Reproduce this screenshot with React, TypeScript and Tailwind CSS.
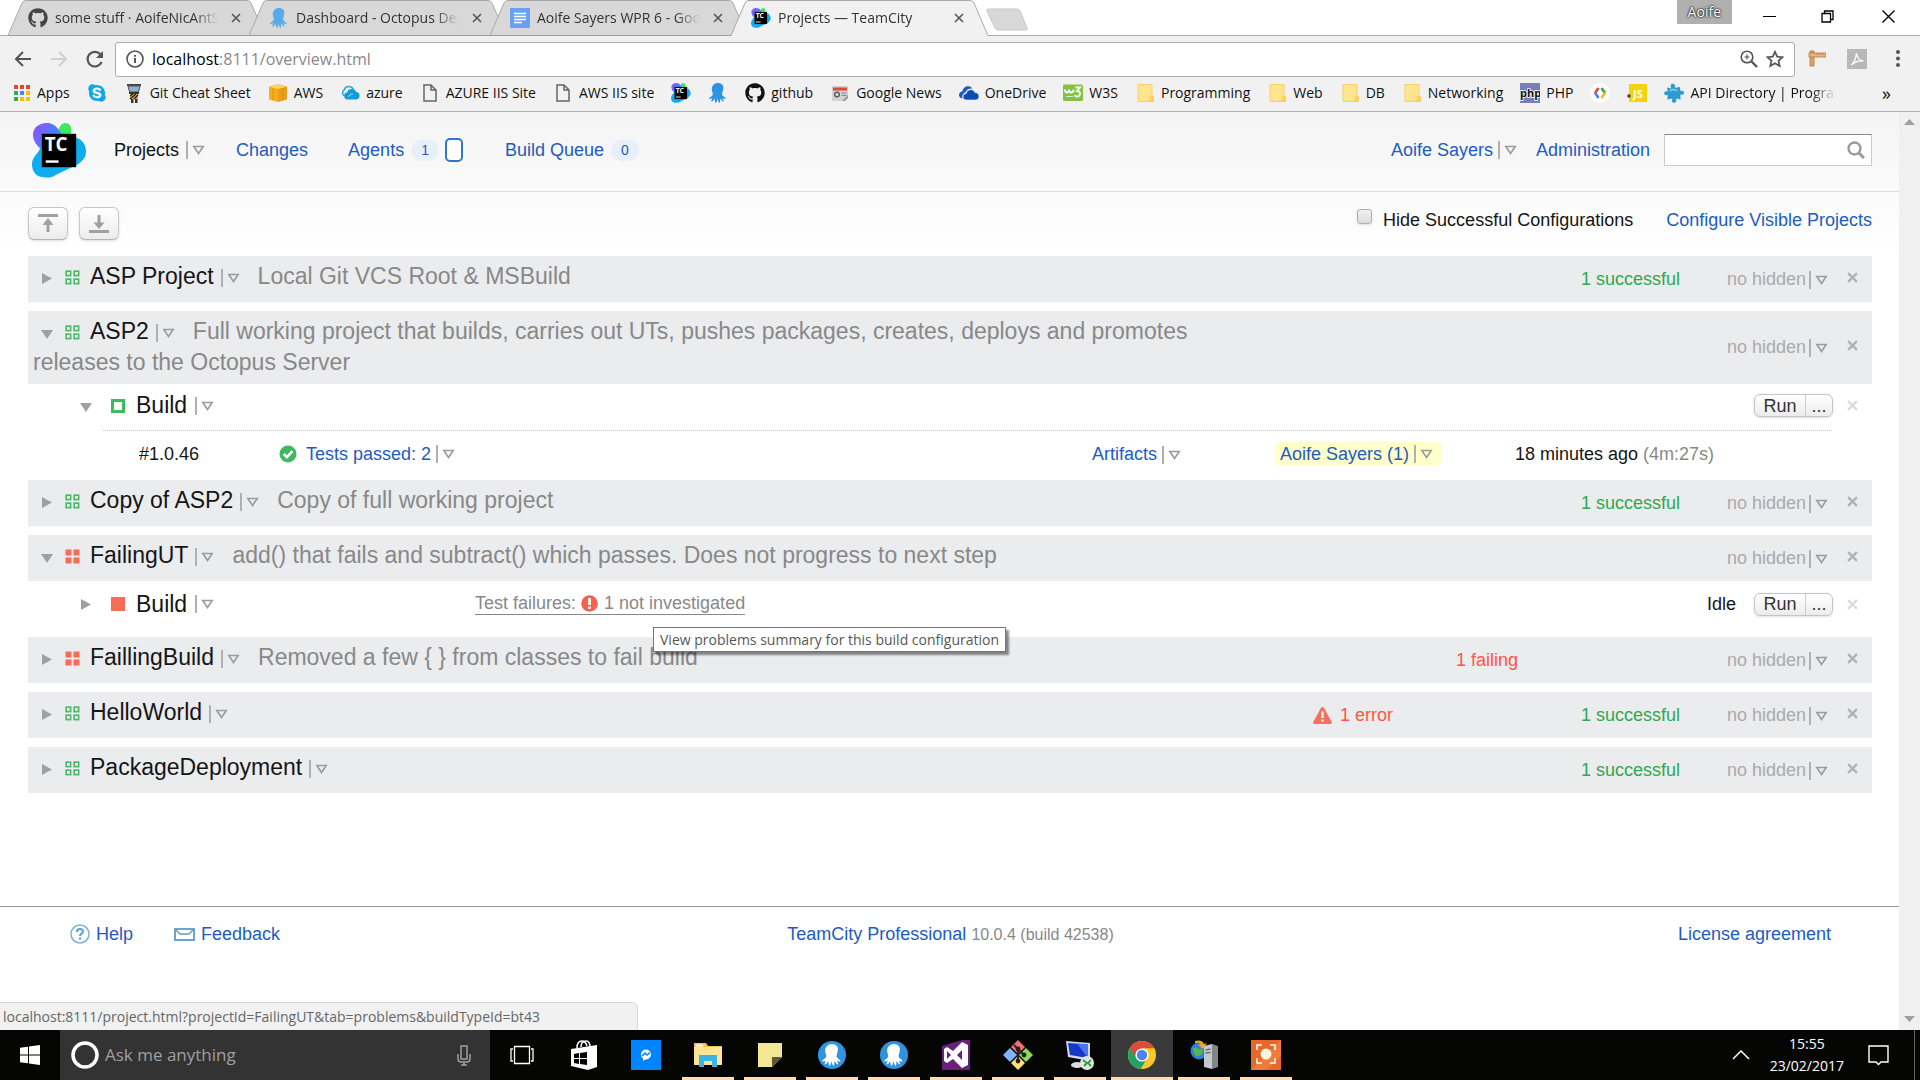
import React from "react";
import { FaGithub, FaSkype } from "react-icons/fa";

const UI = "font-['Open_Sans','Noto_Sans',sans-serif]";

/* ---------- drawings ---------- */

function TeamCityIcon({ size, id }: { size: number; id: string }) {
  return (
    <svg width={size} height={size} viewBox="0 0 56 56" aria-hidden="true">
      <defs>
        <linearGradient id={id} x1="0" y1="0" x2="1" y2="0.6">
          <stop offset="0" stopColor="#9a4cff" />
          <stop offset="1" stopColor="#2196ff" />
        </linearGradient>
      </defs>
      <path d="M26 12C27 4 30 0 34 0c4 0 6 3 6 8l-2 12H24z" fill="#3bea62" />
      <path d="M1 12C1 4 8 0 15 0c5 0 9 2 13 8l4 7-19 14C6 25 1 19 1 12z" fill={`url(#${id})`} />
      <path d="M44 15c7 1 11 7 11 14 0 6-3 9-8 13L24 53c-4 3-8 3-13 2C4 55 0 49 0 42c0-5 3-9 6-12l5-9z" fill="#0eaeee" />
      <rect x="10" y="11" width="35" height="34" fill="#000" />
      <text x="13" y="28" fontFamily="Open Sans, sans-serif" fontWeight="700" fontSize="19" fill="#fff">TC</text>
      <rect x="14" y="38" width="13" height="2.5" fill="#fff" />
    </svg>
  );
}

function Octopus({ size, color = "#2f93e0" }: { size: number; color?: string }) {
  return (
    <svg width={size} height={size} viewBox="0 0 20 20" aria-hidden="true">
      <path
        fill={color}
        d="M10 0C6.300 0 3.800 2.700 3.800 6c0 2.200 1 3.600 1 5.200 0 1.800-3 2.500-3.800 4.600 1.200.5 2.500-.2 3.300-.7-.2 1.400-1.200 2.300-1 3.500 1.800-.2 2.600-2 3.200-3.200.4 1.600.2 3.400 1.200 4.600 1.300-.9 1.300-2.800 1.600-4.300.8 1.400.8 3.400 2.300 4.300.9-1.300.3-3 .7-4.600.9 1 1.600 2.900 3.300 3.200.1-1.300-.8-2.200-1.100-3.500.9.600 2.100 1.200 3.400.7-.9-2.100-3.800-2.800-3.800-4.600 0-1.600 1.100-3 1.100-5.200C16.200 2.700 13.700 0 10 0z"
      />
    </svg>
  );
}

function DocsIcon() {
  return (
    <svg width="20" height="20" viewBox="0 0 20 20" aria-hidden="true">
      <rect width="20" height="20" rx="1" fill="#699ff5" />
      <path d="M4 5.500h12M4 8.500h12M4 11.500h12M4 14.500h8" stroke="#fff" strokeWidth="1.400" />
    </svg>
  );
}

function Close({ size = 10, color = "#555", w = 1.6 }: { size?: number; color?: string; w?: number }) {
  return (
    <svg width={size} height={size} viewBox="0 0 10 10" aria-hidden="true">
      <path d="M1 1l8 8M9 1l-8 8" stroke={color} strokeWidth={w} fill="none" />
    </svg>
  );
}

function FileIcon() {
  return (
    <svg width="20" height="20" viewBox="0 0 20 20" fill="none" stroke="#666" strokeWidth="1.500" aria-hidden="true">
      <path d="M4 2h7l5 5v11H4zM11 2v5h5" />
    </svg>
  );
}

function Folder() {
  return (
    <svg width="20" height="20" viewBox="0 0 20 20" aria-hidden="true">
      <path d="M3 1.500h14V13l1.500 1v4.500H3z" fill="#ffe58f" stroke="#f6d264" />
      <path d="M15 13.500h3v5h-3z" fill="#ffd968" stroke="#f0c24a" strokeWidth=".6" />
    </svg>
  );
}

function AppsIcon() {
  const c = ["#ea4335", "#ea4335", "#ea4335", "#34a853", "#4285f4", "#fbbc05", "#34a853", "#fbbc05", "#fbbc05"];
  return (
    <svg width="20" height="20" viewBox="0 0 20 20" aria-hidden="true">
      {c.map((f, i) => (
        <rect key={i} x={3 + (i % 3) * 6} y={2 + Math.floor(i / 3) * 6} width="4" height="4" fill={f} />
      ))}
    </svg>
  );
}

function TowerIcon() {
  return (
    <svg width="20" height="20" viewBox="0 0 20 20" aria-hidden="true">
      <path d="M3 1h14v2H3z" fill="#444" />
      <path d="M4 3h12l-1.500 6h-9z" fill="#8fb3c4" stroke="#555" />
      <path d="M5 9h10v2H5z" fill="#333" />
      <path d="M6 11h8v5H6z" fill="#e0a83c" />
      <path d="M6 13l3-2M6 16l6-5M10 16l4-4" stroke="#222" strokeWidth="1.300" />
      <path d="M7 16h2.500v4H7zM11 16h2.500v4H11z" fill="#333" />
    </svg>
  );
}

function AwsIcon() {
  return (
    <svg width="20" height="20" viewBox="0 0 20 20" aria-hidden="true">
      <path d="M1 3.500L10 1v18l-9-2.500z" fill="#f6ad1f" />
      <path d="M19 3.500L10 1v18l9-2.500z" fill="#eb9f16" />
      <path d="M1 3.500L10 1l9 2.500L10 6z" fill="#ffd36b" />
      <path d="M5 5v12M15 5v12" stroke="#d98d0c" strokeWidth=".8" />
    </svg>
  );
}

function AzureIcon() {
  return (
    <svg width="20" height="20" viewBox="0 0 20 20" aria-hidden="true">
      <path d="M4.500 13a3.500 3.500 0 0 1-.4-6A5 5 0 0 1 13.500 6.600" fill="none" stroke="#35a8e0" strokeWidth="1.600" />
      <path d="M7.500 16.500a3.700 3.700 0 0 1-.3-7.300 4.800 4.800 0 0 1 9-.2 3.800 3.800 0 0 1 .3 7.500z" fill="#0b9ddd" />
      <path d="M8 13.500c2 0 2-3.500 5-2.500" fill="none" stroke="#bfe6f7" strokeWidth="1" />
    </svg>
  );
}

function NewsIcon() {
  return (
    <svg width="20" height="20" viewBox="0 0 20 20" aria-hidden="true">
      <path d="M2 3h16v12l-3 3H2z" fill="#d2d2d2" />
      <rect x="3" y="4.500" width="14" height="3" fill="#e2493b" />
      <circle cx="7" cy="11.500" r="2.400" fill="none" stroke="#555" strokeWidth="1.300" />
      <path d="M11.500 10h5M11.500 12.500h5" stroke="#888" />
      <path d="M12 18l6-6v3l-3 3z" fill="#9a9a9a" />
    </svg>
  );
}

function OneDriveIcon() {
  return (
    <svg width="20" height="20" viewBox="0 0 20 20" aria-hidden="true">
      <path d="M3.500 15.500C1 15 0 13.500 0 12c0-2 1.500-3.300 3.300-3.500C4 4.500 7 3 9.500 3.200c1.800.2 3 1 4 2.500-3.500-.6-6 1-6.800 3.600-2.600.4-3.800 3.500-3.200 6.200z" fill="#1d56bd" />
      <path d="M7.300 17C5.300 17 4 15.700 4 14c0-2 1.300-3.200 3.200-3.400.5-2.400 2.300-3.900 4.600-3.900 2 0 3.500 1.100 4.200 2.900 2.500 0 4 1.600 4 3.700S18.500 17 16.500 17z" fill="#0d4cb3" stroke="#f1f1f1" strokeWidth=".6" />
    </svg>
  );
}

function W3Icon() {
  return (
    <svg width="20" height="20" viewBox="0 0 20 20" aria-hidden="true">
      <rect y="1.500" width="20" height="16.500" rx="1.500" fill="#82c341" />
      <path d="M2 6.500c0 4 4 4 4 0 0 4 4.500 4 4.500 0M12.500 4.500H17L14 8c4.500 0 3.500 6 0 5.500-1.200 0-2-.5-2-1.500" fill="none" stroke="#fff" strokeWidth="1.800" />
      <path d="M3 13.500h7" stroke="#d6efbc" />
    </svg>
  );
}

function PhpIcon() {
  return (
    <svg width="20" height="20" viewBox="0 0 20 20" aria-hidden="true">
      <rect width="20" height="20" fill="#7a7db8" />
      <text x="0" y="14" fontFamily="Open Sans, sans-serif" fontWeight="700" fontSize="11" fill="#111" stroke="#fff" strokeWidth="1.600" paintOrder="stroke">php</text>
    </svg>
  );
}

function CodeIcon() {
  return (
    <svg width="20" height="20" viewBox="0 0 20 20" fill="none" strokeWidth="2.600" aria-hidden="true">
      <circle cx="10" cy="10" r="10" fill="#fff" />
      <path d="M8.500 5L5 10" stroke="#ea4335" />
      <path d="M5 9.500l3.500 5.500" stroke="#4285f4" />
      <path d="M11.500 5l3.500 5" stroke="#34a853" />
      <path d="M15 9.500L11.500 15" stroke="#fbbc05" />
    </svg>
  );
}

function JsIcon() {
  return (
    <svg width="20" height="20" viewBox="0 0 20 20" aria-hidden="true">
      <rect x="2" y="1" width="18" height="18" fill="#f3d40b" />
      <text x="6" y="15" fontFamily="Open Sans, sans-serif" fontWeight="700" fontSize="11" fill="#fff">JS</text>
      <circle cx="2" cy="13" r="1.800" fill="#444" />
    </svg>
  );
}

function PuzzleIcon() {
  return (
    <svg width="20" height="20" viewBox="0 0 20 20" aria-hidden="true">
      <path
        fill="#2e9bd0"
        d="M3 4.600l4.200 1C6.600 3.800 6 1.600 8 .8c2.200-.6 3.600 1 2.900 4L16 4l.3 4c1.500-.6 3.200-.6 3.600 1.200.4 2.200-1.400 3-3.600 2.400l.3 5-4.600-1c.8 2 .2 4-1.600 4.200-2.200.2-2.900-1.500-2-4.200l-5 1 .3-4.600c-2 .7-3.300.2-3.600-1.400C.1 8.600 1.300 7.800 3.700 8.600z"
      />
      <path d="M6 8c2-2 5-2 7 0" stroke="#8dd3f2" fill="none" strokeWidth="1.500" />
    </svg>
  );
}

function ProjectGrid({ failing }: { failing?: boolean }) {
  const spots = [[0, 0], [8, 0], [0, 8], [8, 8]];
  return (
    <svg className="inline-block ml-3 mr-2.5" width="15" height="15" viewBox="0 0 15 15" aria-hidden="true">
      {spots.map(([x, y]) =>
        failing ? (
          <rect key={`${x}-${y}`} x={x + 0.5} y={y + 0.5} width="6" height="6" fill="#f76b59" />
        ) : (
          <rect key={`${x}-${y}`} x={x + 1.2} y={y + 1.2} width="4.400" height="4.400" fill="#f4f6f5" stroke="#4cb96a" strokeWidth="1.700" />
        ),
      )}
    </svg>
  );
}

function Disclosure({ open }: { open?: boolean }) {
  return (
    <button type="button" aria-label={open ? "Collapse" : "Expand"} className="inline-block w-3 h-3 leading-none align-middle">
      <svg width="12" height="12" viewBox="0 0 12 12" aria-hidden="true">
        {open ? <path d="M0 3h12L6 12z" fill="#a0a0a0" /> : <path d="M1 1l10 5.500-10 5.500z" fill="#a0a0a0" />}
      </svg>
    </button>
  );
}

function MenuArrow({ label, className = "" }: { label: string; className?: string }) {
  return (
    <button type="button" aria-label={label} className={`inline-flex items-center gap-1 align-middle ${className}`}>
      <span className="w-0.5 h-[18px] bg-[#b0b0b0]" />
      <svg width="13" height="10" viewBox="0 0 13 10" aria-hidden="true">
        <path d="M1.800 1.500h9.400L6.500 8.500z" fill="none" stroke="#9b9b9b" strokeWidth="1.600" />
      </svg>
    </button>
  );
}

/* ---------- browser chrome ---------- */

function Tab({ icon, title, active }: { icon: React.ReactNode; title: string; active?: boolean }) {
  const fill = active ? "#f1f1f1" : "#d8d8d8";
  return (
    <div className={`relative w-[241px] h-9 ${active ? "z-10" : ""}`}>
      <svg className="absolute left-0 top-0" width="257" height="36" viewBox="0 0 257 36" aria-hidden="true">
        <path d="M0 36L14 3Q15 .5 18 .5H239Q242 .5 243 3L257 36z" fill={fill} />
        <path d="M0 35.500L14 3Q15 .5 18 .5H239Q242 .5 243 3L257 35.500" fill="none" stroke="#a9a9a9" />
        {!active && <path d="M0 35.500H257" stroke="#9c9c9c" />}
      </svg>
      <div className="relative flex items-center h-full pl-5 pr-[3px]">
        <button type="button" className="flex items-center gap-[7px] flex-1 min-w-0 text-left">
          <span className="w-5 shrink-0">{icon}</span>
          <span className="flex-1 overflow-hidden whitespace-nowrap text-sm text-[#333] [mask-image:linear-gradient(to_right,#000_85%,transparent)]">
            {title}
          </span>
        </button>
        <button type="button" aria-label="Close tab" className="w-5 flex justify-center ml-2"><Close /></button>
      </div>
    </div>
  );
}

function TabStrip() {
  return (
    <div className="flex h-9 bg-white border-b border-[#a9a9a9] pl-2">
      <Tab icon={<FaGithub size={20} color="#444" />} title="some stuff · AoifeNicAntSaoir" />
      <Tab icon={<Octopus size={20} color="#5aaae8" />} title="Dashboard - Octopus Deploy" />
      <Tab icon={<DocsIcon />} title="Aoife Sayers WPR 6 - Google Docs" />
      <Tab icon={<TeamCityIcon size={20} id="tcTab" />} title="Projects — TeamCity" active />
      <button type="button" aria-label="New tab" className="ml-3.5 mt-1 self-center">
        <svg width="43" height="23" viewBox="0 0 43 23" aria-hidden="true">
          <path d="M2 1h29q2 0 3 2l7 17q.5 2-1.500 2H12q-2 0-3-2L1 3q-.5-2 1-2z" fill="#d8d8d8" stroke="#c6c6c6" />
        </svg>
      </button>
      <div className="ml-auto flex items-start">
        <span className="bg-[#b0b0b0] text-white text-sm leading-6 px-[11px] [text-shadow:0_0_2px_#000,0_0_2px_#000]">Aoife</span>
        <div className="flex h-8 items-center ml-2">
          <button type="button" aria-label="Minimise" className="w-[58px] flex justify-center">
            <svg width="13" height="13" viewBox="0 0 13 13"><path d="M0 6.500h13" stroke="#000" /></svg>
          </button>
          <button type="button" aria-label="Restore" className="w-[58px] flex justify-center">
            <svg width="13" height="13" viewBox="0 0 13 13" fill="none" stroke="#000" strokeWidth="1.300">
              <path d="M1 3.500h8.500V12H1zM3.500 3.500V1H12v8.500H9.500" />
            </svg>
          </button>
          <button type="button" aria-label="Close" className="w-16 flex justify-center"><Close size={15} color="#000" w={0.9} /></button>
        </div>
      </div>
    </div>
  );
}

function Toolbar() {
  return (
    <div className="flex items-center h-10 pt-1.5 bg-[#f1f1f1]">
      <div className="flex items-center pl-[5px] pr-[3px]">
        <button type="button" aria-label="Back" className="w-9 flex justify-center">
          <svg width="18" height="18" viewBox="0 0 18 18" fill="none" stroke="#555" strokeWidth="2"><path d="M17 9H2M9 2L2 9l7 7" /></svg>
        </button>
        <button type="button" aria-label="Forward" className="w-9 flex justify-center">
          <svg width="18" height="18" viewBox="0 0 18 18" fill="none" stroke="#d0d0d0" strokeWidth="2"><path d="M1 9h15M9 2l7 7-7 7" /></svg>
        </button>
        <button type="button" aria-label="Reload" className="w-[35px] flex justify-center">
          <svg width="19" height="19" viewBox="0 0 19 19" aria-hidden="true">
            <path d="M15.500 4.500A7.300 7.300 0 1 0 16.600 12" fill="none" stroke="#555" strokeWidth="2.200" />
            <path d="M18 1v7h-7z" fill="#555" />
          </svg>
        </button>
      </div>
      <div className="flex flex-1 items-center h-[35px] bg-white border border-[#aaa] rounded-[3px] px-2.5 gap-2">
        <svg width="18" height="18" viewBox="0 0 18 18" fill="none" stroke="#555" strokeWidth="1.600" aria-hidden="true">
          <circle cx="9" cy="9" r="8" /><path d="M9 8v5M9 5v1.800" strokeWidth="2" />
        </svg>
        <div className="flex-1 text-[16px] text-[#888] whitespace-nowrap"><span className="text-black">localhost</span>:8111/overview.html</div>
        <button type="button" aria-label="Zoom">
          <svg width="18" height="18" viewBox="0 0 18 18" fill="none" stroke="#555" strokeWidth="1.600">
            <circle cx="7" cy="7" r="5.800" /><path d="M7 4.500v5M4.500 7h5" strokeWidth="1.200" /><path d="M11.500 11.500l5.500 5.500" strokeWidth="2.400" />
          </svg>
        </button>
        <button type="button" aria-label="Bookmark this page">
          <svg width="18" height="18" viewBox="0 0 18 18" fill="none" stroke="#555" strokeWidth="1.700">
            <path d="M9 1.800l2.200 4.900 5.300.5-4 3.600 1.200 5.300L9 13.300l-4.700 2.800 1.200-5.300-4-3.600 5.300-.5z" />
          </svg>
        </button>
      </div>
      <div className="flex items-center">
        <button type="button" aria-label="Ruler" className="w-11 flex justify-center">
          <svg width="18" height="18" viewBox="0 0 18 18" aria-hidden="true">
            <path d="M2 1h4v15H2z" fill="#e0a066" stroke="#b9763a" strokeWidth=".8" />
            <path d="M1 3h17v4H1z" fill="#eab27e" stroke="#b9763a" strokeWidth=".8" />
            <path d="M9 3v2M12 3v2M15 3v2" stroke="#b9763a" strokeWidth=".8" />
          </svg>
        </button>
        <button type="button" aria-label="PDF" className="w-9 flex justify-center">
          <svg width="20" height="20" viewBox="0 0 20 20" aria-hidden="true">
            <rect width="20" height="20" fill="#b8b8b8" />
            <path d="M4 16c3-2 5-7 5.500-12 1 6 3 8 7 8-4-.5-8 .5-12.500 4z" fill="none" stroke="#fff" strokeWidth="1.300" />
          </svg>
        </button>
        <button type="button" aria-label="Menu" className="w-[45px] flex justify-center">
          <svg width="6" height="20" viewBox="0 0 6 20" fill="#555"><circle cx="3" cy="3" r="2" /><circle cx="3" cy="9.500" r="2" /><circle cx="3" cy="16" r="2" /></svg>
        </button>
      </div>
    </div>
  );
}

const bookmarks: { icon: React.ReactNode; label?: string; name?: string }[] = [
  { icon: <AppsIcon />, label: "Apps" },
  { icon: <FaSkype size={20} color="#0ba8ea" />, name: "Skype" },
  { icon: <TowerIcon />, label: "Git Cheat Sheet" },
  { icon: <AwsIcon />, label: "AWS" },
  { icon: <AzureIcon />, label: "azure" },
  { icon: <FileIcon />, label: "AZURE IIS Site" },
  { icon: <FileIcon />, label: "AWS IIS site" },
  { icon: <TeamCityIcon size={20} id="tcBm" />, name: "TeamCity" },
  { icon: <Octopus size={20} />, name: "Octopus" },
  { icon: <FaGithub size={20} color="#111" />, label: "github" },
  { icon: <NewsIcon />, label: "Google News" },
  { icon: <OneDriveIcon />, label: "OneDrive" },
  { icon: <W3Icon />, label: "W3S" },
  { icon: <Folder />, label: "Programming" },
  { icon: <Folder />, label: "Web" },
  { icon: <Folder />, label: "DB" },
  { icon: <Folder />, label: "Networking" },
  { icon: <PhpIcon />, label: "PHP" },
  { icon: <CodeIcon />, name: "Developers" },
  { icon: <JsIcon />, name: "JS" },
];

function BookmarksBar() {
  return (
    <div className="flex items-center h-9 pl-[11px] pr-[29px] pb-0.5 gap-[17px] bg-[#f1f1f1] border-b border-[#b0b0b0] text-sm whitespace-nowrap text-[#111]">
      {bookmarks.map((b, i) => (
        <a key={i} href="#" aria-label={b.label ? undefined : b.name} className="flex items-center gap-1.5 shrink-0">
          {b.icon}
          {b.label}
        </a>
      ))}
      <a href="#" className="flex items-center gap-1.5 w-[172px] min-w-0 overflow-hidden [mask-image:linear-gradient(to_right,#000_85%,transparent)]">
        <span className="shrink-0"><PuzzleIcon /></span>API Directory | ProgrammableWeb
      </a>
      <button type="button" aria-label="More bookmarks" className="ml-auto text-lg">»</button>
    </div>
  );
}

/* ---------- TeamCity page ---------- */

function Header() {
  return (
    <header className="flex items-center h-20 pl-8 pr-[27px] pb-[3px] border-b border-[#dcdcdc] bg-linear-to-b from-[#f4f4f4] to-[#fafafa] text-[#1d5cc0]">
      <TeamCityIcon size={55} id="tcLogo" />
      <nav className="flex items-center ml-[27px]">
        <a href="#" className="text-[#111]">Projects</a>
        <MenuArrow label="Projects menu" className="ml-[7px]" />
        <a href="#" className="ml-[31px]">Changes</a>
        <a href="#" className="ml-10">Agents</a>
        <span className="ml-[7px] px-2.5 rounded-full bg-[#e6effa] text-sm leading-[21px]">1</span>
        <span className="ml-1.5 w-[18px] h-6 rounded-[5px] border-2 border-[#2f76cf] bg-white" />
        <a href="#" className="ml-[42px]">Build Queue</a>
        <span className="ml-[7px] px-2.5 rounded-full bg-[#e6effa] text-sm leading-[21px]">0</span>
      </nav>
      <div className="ml-auto flex items-center">
        <a href="#">Aoife Sayers</a>
        <MenuArrow label="User menu" className="ml-[5px]" />
        <a href="#" className="ml-[19px]">Administration</a>
        <div className="ml-3.5 flex items-center w-[208px] h-8 bg-white border border-[#ccc] border-t-[#888] pr-1.5">
          <input type="text" aria-label="Search" className="flex-1 min-w-0 h-full px-2 outline-none" />
          <svg width="18" height="18" viewBox="0 0 18 18" fill="none" stroke="#999" aria-hidden="true">
            <circle cx="7.500" cy="7.500" r="6" strokeWidth="2.400" /><path d="M12 12l5 5" strokeWidth="3" />
          </svg>
        </div>
      </div>
    </header>
  );
}

function SquareButton({ label, children }: { label: string; children: React.ReactNode }) {
  return (
    <button
      type="button"
      aria-label={label}
      className="flex items-center justify-center w-10 h-[33px] rounded-md border border-[#c8c8c8] border-b-[#b4b4b4] bg-linear-to-b from-white to-[#ececec] shadow-sm"
    >
      {children}
    </button>
  );
}

function PageActions() {
  return (
    <div className="flex items-start pt-[15px] pb-4">
      <div className="flex gap-[11px]">
        <SquareButton label="Collapse all">
          <svg width="20" height="20" viewBox="0 0 20 20" fill="#a0a0a0"><path d="M0 0h20v3H0zM10 4l5.500 7h-4v7h-3v-7h-4z" /></svg>
        </SquareButton>
        <SquareButton label="Expand all">
          <svg width="20" height="20" viewBox="0 0 20 20" fill="#a0a0a0"><path d="M0 16h20v3H0zM10 15l5.500-6.500h-4V1h-3v7.500h-4z" /></svg>
        </SquareButton>
      </div>
      <div className="ml-auto flex items-start pt-px">
        <label className="flex items-start gap-[11px]">
          <input
            type="checkbox"
            className="appearance-none w-[15px] h-[15px] mt-px rounded-[3px] border border-[#b0b0b0] bg-linear-to-b from-[#f0f0f0] to-[#dcdcdc] shadow-sm"
          />
          Hide Successful Configurations
        </label>
        <a href="#" className="ml-[33px] text-[#1d5cc0]">Configure Visible Projects</a>
      </div>
    </div>
  );
}

type Project = {
  name: string;
  desc?: string;
  open?: boolean;
  failing?: boolean;
  error?: string;
  fail?: string;
  ok?: string;
};

function ProjectRow({ p }: { p: Project }) {
  return (
    <div className="flex items-center min-h-[46px] bg-[#ebecee]">
      <h2 className="flex-1 min-w-0 self-start pt-[5px] pb-1.5 pl-[5px] pr-10 text-[23px] leading-[31px] text-[#888] font-normal">
        <span className="pl-2"><Disclosure open={p.open} /></span>
        <ProjectGrid failing={p.failing} />
        <a href="#" className="text-[#151515]">{p.name}</a>
        <MenuArrow label={`${p.name} menu`} className="ml-[7px] mr-[18px]" />
        {p.desc}
      </h2>
      <span className="w-[143px] flex items-center gap-2 text-[#ff5543]">
        {p.error && (
          <>
            <svg width="19" height="17" viewBox="0 0 19 17" aria-hidden="true">
              <path d="M9.500 0q1 0 1.600 1L18.700 15q.5 2-1.200 2h-16Q-.2 17 .3 15L7.900 1Q8.500 0 9.500 0z" fill="#f5705f" />
              <path d="M9.500 4.500v6.500M9.500 12.500v2" stroke="#fff" strokeWidth="2.200" />
            </svg>
            {p.error}
          </>
        )}
      </span>
      <a href="#" className="w-[125px] text-[#ff5543]">{p.fail}</a>
      <a href="#" className="w-[146px] pb-px text-[#2fa84f]">{p.ok}</a>
      <span className="w-[120px] pb-px text-[#aaa]">
        no hidden<MenuArrow label="Hidden configurations" className="ml-[3px]" />
      </span>
      <button type="button" aria-label="Hide project" className="w-[25px] pb-1"><Close size={11} color="#b0b0b0" w={2} /></button>
    </div>
  );
}

function BuildTitle({ open, failing }: { open?: boolean; failing?: boolean }) {
  return (
    <div className="flex items-center pl-[52px] w-[447px]">
      <Disclosure open={open} />
      <svg className="ml-[19px] mr-[11px]" width="14" height="14" viewBox="0 0 14 14" aria-hidden="true">
        {failing ? <rect width="14" height="14" fill="#f76b59" /> : <rect x="1.500" y="1.500" width="11" height="11" fill="#fff" stroke="#3dbb5f" strokeWidth="3" />}
      </svg>
      <a href="#" className="text-[23px] leading-[31px] text-[#151515]">Build</a>
      <MenuArrow label="Build menu" className="ml-2" />
    </div>
  );
}

function RunControls({ idle }: { idle?: boolean }) {
  return (
    <div className="ml-auto flex items-center">
      {idle && <span className="mr-[18px]">Idle</span>}
      <div className="flex h-[23px] leading-[20px] rounded-md border border-[#c4c4c4] bg-linear-to-b from-white to-[#ececec] shadow-sm text-[#333]">
        <button type="button" className="w-[50px]">Run</button>
        <button type="button" className="w-[27px] border-l border-[#ccc]">...</button>
      </div>
      <button type="button" aria-label="Hide build configuration" className="w-[25px] ml-3.5"><Close size={11} color="#dadada" w={2} /></button>
    </div>
  );
}

function Asp2Builds() {
  return (
    <div>
      <div className="flex items-center h-[46px] pb-[3px]">
        <BuildTitle open />
        <RunControls />
      </div>
      <div className="flex items-center h-[50px] ml-[75px] mr-10 pb-1 border-t border-dotted border-[#c8c8c8]">
        <a href="#" className="w-[176px] pl-9 text-[#151515]">#1.0.46</a>
        <div className="flex-1 flex items-center text-[#1d5cc0]">
          <svg className="mr-[9px]" width="18" height="18" viewBox="0 0 18 18" aria-hidden="true">
            <circle cx="9" cy="9" r="8.500" fill="#3fb95f" /><path d="M4.800 9l3.200 3.200 5.400-6" fill="none" stroke="#fff" strokeWidth="2.600" />
          </svg>
          <a href="#">Tests passed: 2</a>
          <MenuArrow label="Test results" className="ml-[5px]" />
        </div>
        <div className="w-[183px] text-[#1d5cc0]"><a href="#">Artifacts</a><MenuArrow label="Artifacts list" className="ml-[5px]" /></div>
        <div className="w-[240px] text-[#1d5cc0]">
          <span className="inline-flex items-center h-6 pl-[5px] pr-2 rounded-[5px] bg-[#ffffc9]">
            <a href="#">Aoife Sayers (1)</a><MenuArrow label="Changes list" className="ml-[5px]" />
          </span>
        </div>
        <div className="w-[317px]">18 minutes ago <span className="text-[#888]">(4m:27s)</span></div>
      </div>
    </div>
  );
}

function FailingBuilds() {
  return (
    <div className="flex items-center h-14 pb-2.5">
      <BuildTitle failing />
      <div className="relative">
        <a href="#" className="flex items-center leading-[21px] text-[#888] border-b border-[#888]">
          Test failures:
          <svg className="ml-[5px] mr-1.5" width="17" height="17" viewBox="0 0 17 17" aria-hidden="true">
            <circle cx="8.500" cy="8.500" r="8.300" fill="#f5604f" /><path d="M8.500 3v7M8.500 11.500v2.500" stroke="#fff" strokeWidth="2.800" />
          </svg>
          1 not investigated
        </a>
        <div role="tooltip" className={`absolute left-[178px] top-[34px] z-10 h-[25px] px-1.5 leading-[23px] whitespace-nowrap border border-[#767676] bg-white text-sm text-[#575757] shadow-[3px_3px_2px_rgba(0,0,0,0.45)] ${UI}`}>
          View problems summary for this build configuration
        </div>
      </div>
      <RunControls idle />
    </div>
  );
}

function Footer() {
  return (
    <footer className="grid grid-cols-3 items-start mt-auto h-[124px] pt-[15px] pl-[70px] pr-[68px] border-t border-[#999] text-[#1d5cc0]">
      <div className="flex">
        <a href="#" className="flex items-center gap-1.5">
          <svg width="20" height="20" viewBox="0 0 20 20" aria-hidden="true">
            <circle cx="10" cy="10" r="9" fill="#fff" stroke="#7db0d8" strokeWidth="1.500" />
            <path d="M7 8c0-4 6-4 6-.5 0 2-3 2-3 4.500M10 13.500v2" fill="none" stroke="#5d9ccc" strokeWidth="2" />
          </svg>
          Help
        </a>
        <a href="#" className="flex items-center gap-1.5 ml-[41px]">
          <svg width="21" height="13" viewBox="0 0 21 13" aria-hidden="true">
            <rect x="1" y="1" width="19" height="11" fill="#fff" stroke="#5d9ccc" strokeWidth="1.800" />
            <path d="M2 2l4 4h9l4-4" fill="none" stroke="#5d9ccc" strokeWidth="1.400" />
          </svg>
          Feedback
        </a>
      </div>
      <div className="text-center whitespace-nowrap"><a href="#">TeamCity Professional</a> <span className="text-base text-[#888]">10.0.4 (build 42538)</span></div>
      <div className="text-right"><a href="#">License agreement</a></div>
    </footer>
  );
}

/* ---------- Windows taskbar ---------- */

const OctoTile = () => (
  <span className="flex items-center justify-center w-7 h-7 rounded-full bg-[#2f93e0]"><Octopus size={22} color="#fff" /></span>
);

const tasks: { name: string; icon: React.ReactNode; running?: boolean; active?: boolean }[] = [
  {
    name: "Task view",
    icon: <svg width="24" height="20" viewBox="0 0 24 20" fill="none" stroke="#fff" strokeWidth="1.300"><path d="M4.500 1.500h15v17h-15zM3 4H1v12h2M21 4h2v12h-2" /></svg>,
  },
  {
    name: "Store",
    icon: (
      <svg width="28" height="30" viewBox="0 0 28 30">
        <path d="M7 8C7 3 9 1 12 1s4 2 5 5M11 7c0-4 2-6 5-6s4 3 4 6" fill="none" stroke="#fff" strokeWidth="1.500" />
        <path d="M1 9l26-4v22L18 30 1 26z" fill="#fff" />
        <path d="M4 14l5-1v5H4zM10 13l7-1v6h-7zM4 19h5v5l-5-1zM10 19h7v6l-7-1z" fill="#000" />
      </svg>
    ),
  },
  {
    name: "Messenger",
    icon: (
      <svg width="30" height="30" viewBox="0 0 30 30"><rect width="30" height="30" fill="#0084ff" /><circle cx="15" cy="14.500" r="5" fill="#fff" /><path d="M11 16l3-3 2 2 3-2.500" stroke="#0084ff" fill="none" strokeWidth="1.500" /><path d="M12 18v3l3-2z" fill="#fff" /></svg>
    ),
  },
  {
    name: "File Explorer",
    running: true,
    icon: (
      <svg width="28" height="24" viewBox="0 0 28 24"><path d="M0 0h12l2 3h14v19H0z" fill="#f5c24c" /><path d="M0 4h28v18H0z" fill="#ffe694" /><path d="M2 1.500h7v2H2z" fill="#fff" /><path d="M5 24V12h18v12h-5v-6h-8v6z" fill="#3bb3e4" /></svg>
    ),
  },
  {
    name: "Sticky Notes",
    running: true,
    icon: <svg width="24" height="24" viewBox="0 0 24 24"><path d="M0 0h24v14l-10 10H0z" fill="#f3e794" /><path d="M14 14h10L14 24z" fill="#5b5636" /></svg>,
  },
  { name: "Octopus Server", running: true, icon: <OctoTile /> },
  { name: "Octopus Tentacle", running: true, icon: <OctoTile /> },
  {
    name: "Visual Studio",
    running: true,
    icon: (
      <svg width="28" height="30" viewBox="0 0 28 30"><path d="M0 6L20 0h8v30H0z" fill="#68217a" /><path fillRule="evenodd" d="M20 2l6 3v20l-6 3-9-9-6 4-3-2V9l3-2 6 4zM20 10l-5 5 5 5zM5 11v8l4-4z" fill="#fff" /></svg>
    ),
  },
  {
    name: "Git Bash",
    running: true,
    icon: (
      <svg width="30" height="30" viewBox="0 0 30 30">
        <path d="M15 0l7 7-7 7-7-7z" fill="#f0716c" /><path d="M7 8l7 7-7 7-7-7z" fill="#80b3ff" /><path d="M23 8l7 7-7 7-7-7z" fill="#8ddb5c" /><path d="M15 16l7 7-7 7-7-7z" fill="#ffe07a" />
        <path d="M11 5l4 4v12M15 9l6 6" stroke="#222" strokeWidth="1.800" fill="none" /><circle cx="15" cy="21" r="2.400" fill="#222" /><circle cx="21" cy="15" r="2.400" fill="#222" /><circle cx="15" cy="9" r="2.400" fill="#222" />
      </svg>
    ),
  },
  {
    name: "Remote Desktop",
    running: true,
    icon: (
      <svg width="30" height="30" viewBox="0 0 30 30"><path d="M1 1l24 2v18L3 17z" fill="#cfd6e4" /><path d="M3 3l20 1.500V18L5 15z" fill="#1438c8" /><path d="M12 3.500l11 1V18z" fill="#4a75ea" /><ellipse cx="12" cy="25" rx="6" ry="3" fill="#dcdcdc" /><circle cx="22" cy="23" r="7" fill="#e4e4e4" /><path d="M18 20l4 3-3 3M26 20l-3 3 3 3" stroke="#2f9e3a" strokeWidth="1.800" fill="none" /></svg>
    ),
  },
  {
    name: "Chrome",
    running: true,
    active: true,
    icon: (
      <svg width="28" height="28" viewBox="0 0 28 28"><circle cx="14" cy="14" r="14" fill="#fbc926" /><path d="M1.900 7A14 14 0 0 0 12.500 27.900L19.500 17 14 14z" fill="#1ea362" /><path d="M14 14L8.500 17 1.900 7A14 14 0 0 1 26.300 7.300H14z" fill="#dd4b3e" /><circle cx="14" cy="14" r="6.600" fill="#fff" /><circle cx="14" cy="14" r="5.200" fill="#4a86ee" /></svg>
    ),
  },
  {
    name: "IIS Manager",
    running: true,
    icon: (
      <svg width="28" height="30" viewBox="0 0 28 30"><circle cx="9" cy="11" r="8.500" fill="#2f7fd6" /><path d="M3 8c4-2 5 2 8 1s2 6-2 7-6-3-6-8z" fill="#53b848" /><path d="M5 1q7-2 9 3l3-1-4 6-5-4 3-1q-2-2-6-1z" fill="#f2a51f" /><path d="M14 6l8-2v25l-8-2z" fill="#c3c8cc" /><path d="M22 4l6 2v21l-6 2z" fill="#7f878c" /><path d="M15.500 10l5-1M15.500 13l5-.5" stroke="#6c7478" strokeWidth="1.300" /></svg>
    ),
  },
  {
    name: "Screen capture",
    running: true,
    icon: (
      <svg width="30" height="30" viewBox="0 0 30 30"><rect width="30" height="30" fill="#e8682c" /><path d="M0 30L30 0v16L16 30z" fill="#f08a45" opacity=".6" /><circle cx="15" cy="14" r="5.500" fill="#fbf3dc" /><path d="M6 10V5h5M19 5h5v5M24 18v5h-5M11 23H6v-5" fill="none" stroke="#fff" strokeWidth="1.500" /></svg>
    ),
  },
];

function Taskbar() {
  return (
    <div className={`flex h-[50px] shrink-0 bg-[#050504] text-white ${UI}`}>
      <button type="button" aria-label="Start" className="w-[60px] flex items-center justify-center">
        <svg width="20" height="20" viewBox="0 0 20 20" fill="#fff"><path d="M0 2.800l8-1.100v7.800H0zM9 1.500L20 0v9.500H9zM0 10.500h8v7.800l-8-1.100zM9 10.500h11V20L9 18.500z" /></svg>
      </button>
      <label className="flex items-center w-[430px] mr-px bg-[#333] pl-[11px] pr-[19px] gap-1.5">
        <svg width="28" height="28" viewBox="0 0 28 28" aria-hidden="true"><circle cx="14" cy="14" r="12" fill="none" stroke="#fff" strokeWidth="3.500" /></svg>
        <input type="text" aria-label="Search Windows" placeholder="Ask me anything" className="flex-1 min-w-0 bg-transparent text-[17px] outline-none placeholder:text-[#a0a0a0]" />
        <svg width="14" height="21" viewBox="0 0 14 21" fill="none" stroke="#a0a0a0" strokeWidth="1.500" aria-hidden="true"><path d="M4 1h6v13H4zM1 9v5q0 3 3 3h6q3 0 3-3V9M7 17v3M4 20h6" /></svg>
      </label>
      {tasks.map((t) => (
        <button key={t.name} type="button" aria-label={t.name} className={`relative w-[62px] flex items-center justify-center ${t.active ? "bg-[#3a3a3a]" : ""}`}>
          {t.icon}
          {t.running && <span className={`absolute bottom-0 h-[3px] bg-[#fddcb0] ${t.active ? "inset-x-0" : "inset-x-[5px]"}`} />}
        </button>
      ))}
      <div className="ml-auto flex items-center">
        <button type="button" aria-label="Show hidden icons" className="mr-5">
          <svg width="18" height="10" viewBox="0 0 18 10" fill="none" stroke="#fff" strokeWidth="1.500"><path d="M1 9l8-8 8 8" /></svg>
        </button>
        <div className="text-center text-sm leading-[22px]"><div>15:55</div><div>23/02/2017</div></div>
        <button type="button" aria-label="Notifications" className="ml-6 mr-[25px]">
          <svg width="21" height="21" viewBox="0 0 21 21" fill="none" stroke="#fff" strokeWidth="1.400"><path d="M1 1h19v16h-7l-2.500 2.500L8 17H1z" /></svg>
        </button>
        <span className="w-px h-[50px] mr-[5px] bg-[#666]" />
      </div>
    </div>
  );
}

const asp: Project = { name: "ASP Project", desc: "Local Git VCS Root & MSBuild", ok: "1 successful" };
const asp2: Project = {
  name: "ASP2",
  desc: "Full working project that builds, carries out UTs, pushes packages, creates, deploys and promotes releases to the Octopus Server",
  open: true,
};
const copy: Project = { name: "Copy of ASP2", desc: "Copy of full working project", ok: "1 successful" };
const failingUt: Project = { name: "FailingUT", desc: "add() that fails and subtract() which passes. Does not progress to next step", open: true, failing: true };
const failingBuild: Project = { name: "FaillingBuild", desc: "Removed a few { } from classes to fail build", failing: true, fail: "1 failing" };
const hello: Project = { name: "HelloWorld", error: "1 error", ok: "1 successful" };
const pkg: Project = { name: "PackageDeployment", ok: "1 successful" };

export default function App() {
  return (
    <div className="flex flex-col h-screen min-w-[1600px] overflow-hidden">
      <div className={UI}>
        <TabStrip />
        <Toolbar />
        <BookmarksBar />
      </div>
      <div className="relative flex flex-1 min-h-0">
        <div className="flex-1 min-w-0 flex flex-col bg-white text-[18px] leading-6 text-[#151515] font-['Liberation_Sans',Arial,sans-serif]">
          <Header />
          <main className="pl-7 pr-[27px] bg-linear-to-b from-[#fafafa] to-white to-[60px]">
            <PageActions />
            <div className="flex flex-col gap-[9px]">
              <ProjectRow p={asp} />
              <div>
                <ProjectRow p={asp2} />
                <Asp2Builds />
                <ProjectRow p={copy} />
              </div>
              <div>
                <ProjectRow p={failingUt} />
                <FailingBuilds />
                <ProjectRow p={failingBuild} />
              </div>
              <ProjectRow p={hello} />
              <ProjectRow p={pkg} />
            </div>
          </main>
          <Footer />
        </div>
        <div className="w-[21px] flex flex-col items-center justify-between py-[7px] bg-[#f0f0f0]">
          <svg width="11" height="7" viewBox="0 0 11 7" aria-hidden="true"><path d="M5.500 0L11 6H0z" fill="#a0a0a0" /></svg>
          <svg width="11" height="7" viewBox="0 0 11 7" aria-hidden="true"><path d="M5.500 6L11 0H0z" fill="#a0a0a0" /></svg>
        </div>
        <div className={`absolute left-0 bottom-0 w-[638px] h-7 pl-[3px] leading-7 text-sm text-[#666] bg-[#f1f1f1] border-t border-r border-[#d8d8d8] rounded-tr-md ${UI}`}>
          localhost:8111/project.html?projectId=FailingUT&amp;tab=problems&amp;buildTypeId=bt43
        </div>
      </div>
      <Taskbar />
    </div>
  );
}
